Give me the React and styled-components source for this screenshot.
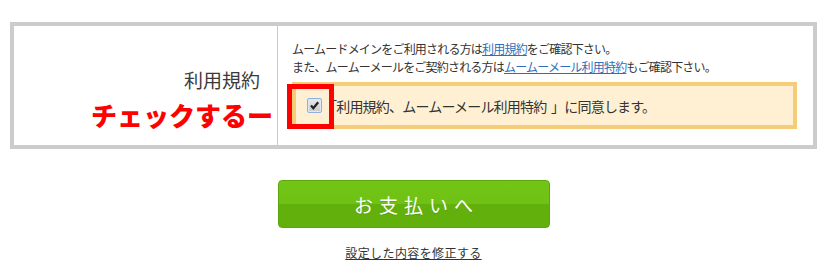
import React from 'react'
import styled, { createGlobalStyle } from 'styled-components'

const GlobalStyle = createGlobalStyle`
  html, body {
    margin: 0;
    padding: 0;
    background: #fff;
  }
  body {
    font-family: "Noto Sans CJK JP", "Liberation Sans", sans-serif;
    color: #333;
  }
`

const Page = styled.div`
  position: relative;
  width: 807px;
  padding: 22px 10px 0;
  display: flex;
  flex-direction: column;
  align-items: center;
`

const Table = styled.div`
  width: 807px;
  box-sizing: border-box;
  border: 4px solid #ccc;
  display: grid;
  grid-template-columns: 263px 536px;
  height: 127px;
`

const LabelCell = styled.div`
  display: flex;
  justify-content: flex-end;
  align-items: flex-start;
  padding: 40px 17px 0 0;
  font-size: 19px;
  line-height: 28px;
  color: #3a3a3a;
`

const BodyCell = styled.div`
  border-left: 1px solid #ccc;
  padding: 14px 16px 0 14px;
`

const Note = styled.p`
  margin: 0;
  font-size: 12px;
  line-height: 18px;
  letter-spacing: -0.8px;
  color: #333;
  white-space: nowrap;
`

const Link = styled.a`
  color: #2f6fba;
  text-decoration: underline;
  cursor: pointer;
`

const AgreeBox = styled.label`
  margin-top: 6px;
  height: 47px;
  box-sizing: border-box;
  border: 4px solid #f5cc78;
  background: #fff0d4;
  display: flex;
  align-items: center;
  padding-left: 11px;
  gap: 1px;
  font-size: 14px;
  letter-spacing: -0.8px;
  color: #333;
  white-space: pre;
`

const CheckBox = styled.span`
  width: 15px;
  height: 15px;
  box-sizing: border-box;
  border: 1px solid #8eb1e0;
  border-radius: 2px;
  background: linear-gradient(#e9e9e9, #c9c9c9);
  box-shadow: inset 0 0 0 1px #dfe8f6;
  display: flex;
  align-items: center;
  justify-content: center;
  margin-top: -1px;
  svg {
    display: block;
  }
`

const PayButton = styled.button`
  margin-top: 31px;
  width: 272px;
  height: 48px;
  border: 1px solid #5aa80c;
  border-radius: 4px;
  background: linear-gradient(#72c516 0%, #6fc214 50%, #62b00b 50%, #62b00b 100%);
  color: #fff;
  font-family: "Noto Sans CJK JP", "Liberation Sans", sans-serif;
  font-size: 19px;
  letter-spacing: 6px;
  text-indent: 6px;
  text-shadow: 0 1px 0 rgba(0, 0, 0, 0.15);
  cursor: pointer;
`

const EditLink = styled.a`
  margin-top: 16px;
  font-size: 12px;
  line-height: 18px;
  letter-spacing: 0.4px;
  color: #333;
  text-decoration: underline;
  cursor: pointer;
`

const Callout = styled.div`
  position: absolute;
  left: 91px;
  top: 98px;
  font-size: 26px;
  font-weight: 900;
  line-height: 34px;
  color: #f00;
  white-space: nowrap;
`

const Marker = styled.div`
  position: absolute;
  left: 287px;
  top: 84px;
  width: 47px;
  height: 45px;
  box-sizing: border-box;
  border: 5px solid #f00;
`

export default function App() {
  return (
    <>
      <GlobalStyle />
      <Page>
        <Table>
          <LabelCell>利用規約</LabelCell>
          <BodyCell>
            <Note>ムームードメインをご利用される方は<Link>利用規約</Link>をご確認下さい。</Note>
            <Note>また、ムームーメールをご契約される方は<Link>ムームーメール利用特約</Link>もご確認下さい。</Note>
            <AgreeBox>
              <CheckBox>
                <svg width="11" height="11" viewBox="0 0 11 11">
                  <path d="M2 5.5 L4.3 8.2 L9.2 2.2" fill="none" stroke="#222" strokeWidth="2.2" />
                </svg>
              </CheckBox>
              <span>「利用規約、ムームーメール利用特約  」に同意します。</span>
            </AgreeBox>
          </BodyCell>
        </Table>
        <PayButton>お支払いへ</PayButton>
        <EditLink>設定した内容を修正する</EditLink>
        <Callout>チェックするー</Callout>
        <Marker />
      </Page>
    </>
  )
}
